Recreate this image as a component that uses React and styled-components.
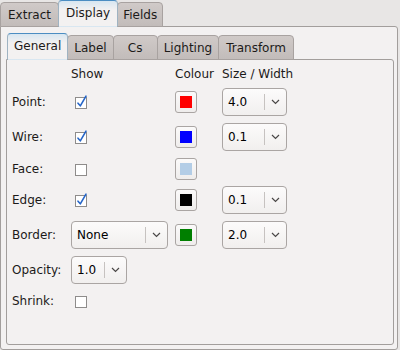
import React from 'react';
import styled, { createGlobalStyle } from 'styled-components';

const GlobalStyle = createGlobalStyle`
  html, body {
    margin: 0;
    padding: 0;
    background: #e8e6e5;
    font-family: 'DejaVu Sans', 'Liberation Sans', sans-serif;
    font-size: 12px;
    color: #1c1a19;
  }
`;

const Window = styled.div`
  width: 400px;
  height: 350px;
  display: flex;
  flex-direction: column;
  box-sizing: border-box;
`;

const TabBar = styled.div`
  display: flex;
  align-items: flex-end;
  height: ${p => p.$h}px;
  padding-left: ${p => p.$indent}px;
  margin-bottom: -1px;
  position: relative;
  z-index: 2;
`;

const Tab = styled.div`
  box-sizing: border-box;
  min-width: ${p => p.$min}px;
  padding: 0 ${p => p.$pad}px;
  height: ${p => (p.$active ? p.$h : p.$h - 2)}px;
  display: flex;
  align-items: center;
  justify-content: center;
  margin-right: -1px;
  border: 1px solid #a8a2a0;
  border-radius: 4px 4px 0 0;
  background: linear-gradient(#d0cac8, #c2bcba);
  color: #1c1a19;
  ${p => p.$active && `
    border-color: #7aa3c4 #9fb3c2 transparent #9fb3c2;
    border-top: 1px solid #4b8dc2;
    background: linear-gradient(#d7e6f1, #f3f1f1 9px, #f3f1f1);
    position: relative;
    z-index: 2;
    padding-bottom: 2px;
  `}
`;

const Pane = styled.div`
  box-sizing: border-box;
  flex: ${p => (p.$grow ? 1 : 'none')};
  border: 1px solid #a29e9c;
  border-radius: 0 3px 3px 3px;
  background: #f3f1f1;
  padding: ${p => p.$pad};
  display: flex;
  flex-direction: column;
  position: relative;
  z-index: 1;
`;

const OuterWrap = styled.div`
  flex: 1;
  display: flex;
  flex-direction: column;
  width: 398px;
`;

const Grid = styled.div`
  display: grid;
  grid-template-columns: 53px 98px 41px 65px;
  grid-template-rows: 14px 28px 28px 21px 28px 28px 28px 20px;
  column-gap: 6px;
  row-gap: 7px;
  padding: 7px 0 0 5px;
  align-items: center;
`;

const Header = styled.div`
  grid-column: ${p => p.$col};
  line-height: 14px;
  white-space: nowrap;
`;

const Label = styled.div`
  grid-column: 1;
  white-space: nowrap;
`;

const CheckWrap = styled.div`
  grid-column: 2;
  padding-left: 4px;
  display: flex;
  align-items: center;
`;

const ColourButton = styled.div`
  grid-column: 3;
  box-sizing: border-box;
  width: 22px;
  height: 22px;
  border: 1px solid #aaa5a3;
  border-radius: 3px;
  background: linear-gradient(#fbfafa, #efedec);
  display: flex;
  align-items: center;
  justify-content: center;
`;

const Swatch = styled.div`
  width: 12px;
  height: 12px;
  background: ${p => p.$c};
`;

const Combo = styled.div`
  grid-column: ${p => p.$col};
  box-sizing: border-box;
  width: ${p => p.$w}px;
  height: 28px;
  border: 1px solid #aaa5a3;
  border-radius: 4px;
  background: linear-gradient(#fcfbfb, #f1efee);
  display: flex;
  align-items: center;
  color: #000;
`;

const ComboText = styled.div`
  flex: 1;
  padding-left: 5px;
  white-space: nowrap;
`;

const ComboArrow = styled.div`
  width: 21px;
  height: 16px;
  border-left: 1px solid #c6c2c0;
  display: flex;
  align-items: center;
  justify-content: center;
`;

const Check = ({ on }) => (
  <svg width="14" height="14" viewBox="0 0 14 14">
    <rect x="0.5" y="2.5" width="11" height="11" fill="#fff" stroke="#8e8c8b" />
    {on && (
      <path d="M3 8.2 L5.3 10.8 L11 1.2" fill="none" stroke="#2565c8" strokeWidth="1.6" strokeLinecap="round" strokeLinejoin="round" />
    )}
  </svg>
);

const Chevron = () => (
  <svg width="9" height="6" viewBox="0 0 9 6">
    <path d="M1 1 L4.5 4.5 L8 1" fill="none" stroke="#4a4847" strokeWidth="1.2" />
  </svg>
);

const Select = ({ col, w, value }) => (
  <Combo $col={col} $w={w}>
    <ComboText>{value}</ComboText>
    <ComboArrow><Chevron /></ComboArrow>
  </Combo>
);

const rows = [
  { label: 'Point:', check: true, colour: '#ff0000', size: '4.0' },
  { label: 'Wire:', check: true, colour: '#0000ff', size: '0.1' },
  { label: 'Face:', check: false, colour: '#b3cde6' },
  { label: 'Edge:', check: true, colour: '#000000', size: '0.1' },
];

export default function App() {
  return (
    <Window>
      <GlobalStyle />
      <TabBar $h={27} $indent={0}>
        <Tab $h={27} $pad={7} $min={46}>Extract</Tab>
        <Tab $h={27} $pad={7} $min={46} $active>Display</Tab>
        <Tab $h={27} $pad={5} $min={46}>Fields</Tab>
      </TabBar>
      <OuterWrap>
        <Pane $grow $pad="6px 3px 4px 5px">
          <TabBar $h={27} $indent={1}>
            <Tab $h={27} $pad={6} $min={45} $active>General</Tab>
            <Tab $h={27} $pad={6} $min={45}>Label</Tab>
            <Tab $h={27} $pad={6} $min={45}>Cs</Tab>
            <Tab $h={27} $pad={6} $min={45}>Lighting</Tab>
            <Tab $h={27} $pad={7} $min={45}>Transform</Tab>
          </TabBar>
          <Pane $grow $pad="0">
            <Grid>
              <Header $col={2}>Show</Header>
              <Header $col={3}>Colour</Header>
              <Header $col={4}>Size / Width</Header>
              {rows.map(r => (
                <React.Fragment key={r.label}>
                  <Label>{r.label}</Label>
                  <CheckWrap><Check on={r.check} /></CheckWrap>
                  <ColourButton><Swatch $c={r.colour} /></ColourButton>
                  {r.size ? <Select col={4} w={65} value={r.size} /> : <div />}
                </React.Fragment>
              ))}
              <Label>Border:</Label>
              <Select col={2} w={97} value="None" />
              <ColourButton><Swatch $c="#007f00" /></ColourButton>
              <Select col={4} w={65} value="2.0" />
              <Label>Opacity:</Label>
              <Select col="2 / span 3" w={56} value="1.0" />
              <Label>Shrink:</Label>
              <CheckWrap><Check on={false} /></CheckWrap>
            </Grid>
          </Pane>
        </Pane>
      </OuterWrap>
    </Window>
  );
}
